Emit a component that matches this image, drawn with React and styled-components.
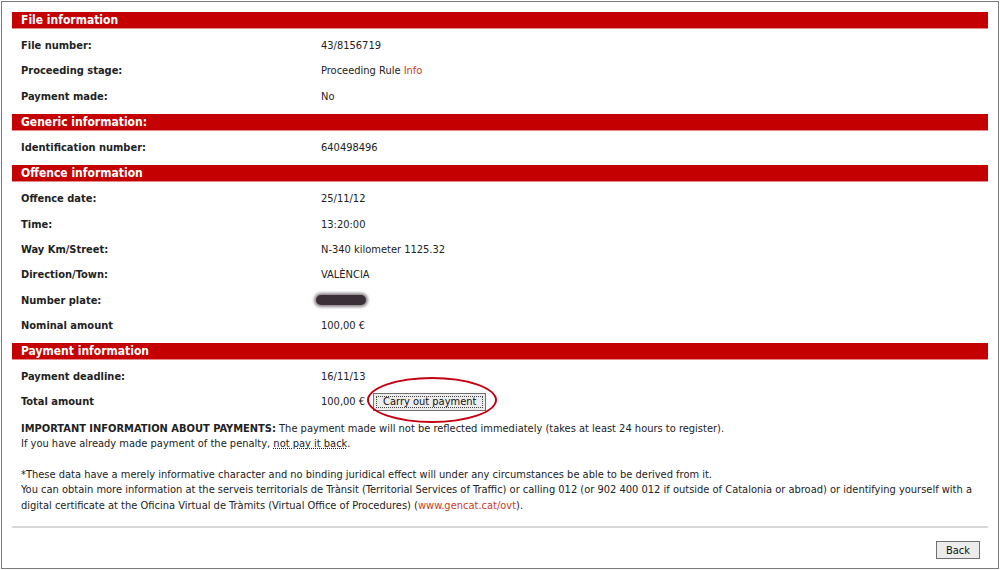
import React from 'react';
import styled, {createGlobalStyle} from 'styled-components';

const GlobalStyle = createGlobalStyle`
  html, body {
    margin: 0;
    padding: 0;
    background: #ffffff;
  }
  body {
    font-family: "DejaVu Sans Condensed", "DejaVu Sans", sans-serif;
    font-size: 11px;
    color: #222;
  }
`;

const sections = [
  {
    title: "File information",
    rows: [
      {label: "File number:", value: "43/8156719"},
      {label: "Proceeding stage:", value: "Proceeding Rule", link: "Info"},
      {label: "Payment made:", value: "No"},
    ],
  },
  {
    title: "Generic information:",
    rows: [{label: "Identification number:", value: "640498496"}],
  },
  {
    title: "Offence information",
    rows: [
      {label: "Offence date:", value: "25/11/12"},
      {label: "Time:", value: "13:20:00"},
      {label: "Way Km/Street:", value: "N-340 kilometer 1125.32"},
      {label: "Direction/Town:", value: "VALÈNCIA"},
      {label: "Number plate:", hidden: true},
      {label: "Nominal amount", value: "100,00 €"},
    ],
  },
  {
    title: "Payment information",
    rows: [
      {label: "Payment deadline:", value: "16/11/13"},
      {label: "Total amount", value: "100,00 €", pay: true},
    ],
  },
];

export default function App() {
  return (
    <>
      <GlobalStyle />
      <Frame>
        {sections.map((s) => (
          <Section key={s.title}>
            <Header>{s.title}</Header>
            <Rows>
              {s.rows.map((r) => (
                <Row key={r.label}>
                  <Label>{r.label}</Label>
                  <Value>
                    {r.hidden ? <Blur /> : r.value}
                    {r.link && <> <RedLink>{r.link}</RedLink></>}
                    {r.pay && (
                      <PayWrap>
                        <Button $focused>Carry out payment</Button>
                        <Circle />
                      </PayWrap>
                    )}
                  </Value>
                </Row>
              ))}
            </Rows>
          </Section>
        ))}

        <Notes>
          <p>
            <b>IMPORTANT INFORMATION ABOUT PAYMENTS:</b> The payment made will not be reflected immediately (takes at least 24 hours to register).
            <br />
            If you have already made payment of the penalty, <Abbr>not pay it back</Abbr>.
          </p>
          <p>
            *These data have a merely informative character and no binding juridical effect will under any circumstances be able to be derived from it.
            <br />
            You can obtain more information at the serveis territorials de Trànsit (Territorial Services of Traffic) or calling 012 (or 902 400 012 if outside of Catalonia or abroad) or identifying yourself with a digital certificate at the Oficina Virtual de Tràmits (Virtual Office of Procedures) (<RedLink>www.gencat.cat/ovt</RedLink>).
          </p>
        </Notes>

        <Rule />
        <Footer>
          <Button>Back</Button>
        </Footer>
      </Frame>
    </>
  );
}

const Frame = styled.div`
  box-sizing: border-box;
  margin: 1px;
  width: 998px;
  height: 568px;
  border: 1px solid #7b7b7b;
  padding: 10px 10px 0 10px;
  display: flex;
  flex-direction: column;
`;

const Section = styled.section`
  display: flex;
  flex-direction: column;
`;

const Header = styled.div`
  height: 17px;
  line-height: 16px;
  background: #c40000;
  border-bottom: 1px solid #e58a8a;
  box-sizing: border-box;
  color: #fff;
  font-weight: bold;
  font-size: 12px;
  padding-left: 9px;
`;

const Rows = styled.div`
  padding: 4px 0 5px;
`;

const Row = styled.div`
  display: grid;
  grid-template-columns: 300px 1fr;
  align-items: center;
  height: 25.3px;
  padding-left: 9px;
`;

const Label = styled.div`
  font-weight: bold;
  color: #222;
`;

const Value = styled.div`
  display: flex;
  align-items: center;
  white-space: pre;
  color: #222;
`;

const RedLink = styled.span`
  color: #c8401e;
`;

const Blur = styled.span`
  display: inline-block;
  width: 50px;
  height: 10px;
  margin-left: -5px;
  border-radius: 6px;
  background: #3b3037;
  box-shadow: 0 0 3px 2px #8a8488;
`;

const PayWrap = styled.span`
  position: relative;
  display: inline-flex;
  margin-left: 8px;
`;

const Button = styled.button`
  font-family: "DejaVu Sans Condensed", "DejaVu Sans", sans-serif;
  font-size: 11px;
  color: #111;
  background: #ececec;
  border: 1px solid #707070;
  height: 18px;
  padding: 0 9px;
  outline: ${(p) => (p.$focused ? "1px dotted #444" : "none")};
  outline-offset: -4px;
`;

const Circle = styled.span`
  position: absolute;
  left: -6px;
  top: -16px;
  width: 126px;
  height: 42px;
  border: 2px solid #c40010;
  border-radius: 50%;
  pointer-events: none;
`;

const Notes = styled.div`
  padding: 1px 0 0 9px;
  line-height: 15.5px;
  color: #222;
  p {
    margin: 0 0 15px;
  }
  p:last-child {
    margin-bottom: 13px;
  }
`;

const Abbr = styled.span`
  text-decoration: underline dotted;
`;

const Rule = styled.hr`
  margin: 0;
  border: none;
  border-top: 2px solid #d8d8d8;
`;

const Footer = styled.div`
  display: flex;
  justify-content: flex-end;
  padding: 13px 8px 0 0;
`;
